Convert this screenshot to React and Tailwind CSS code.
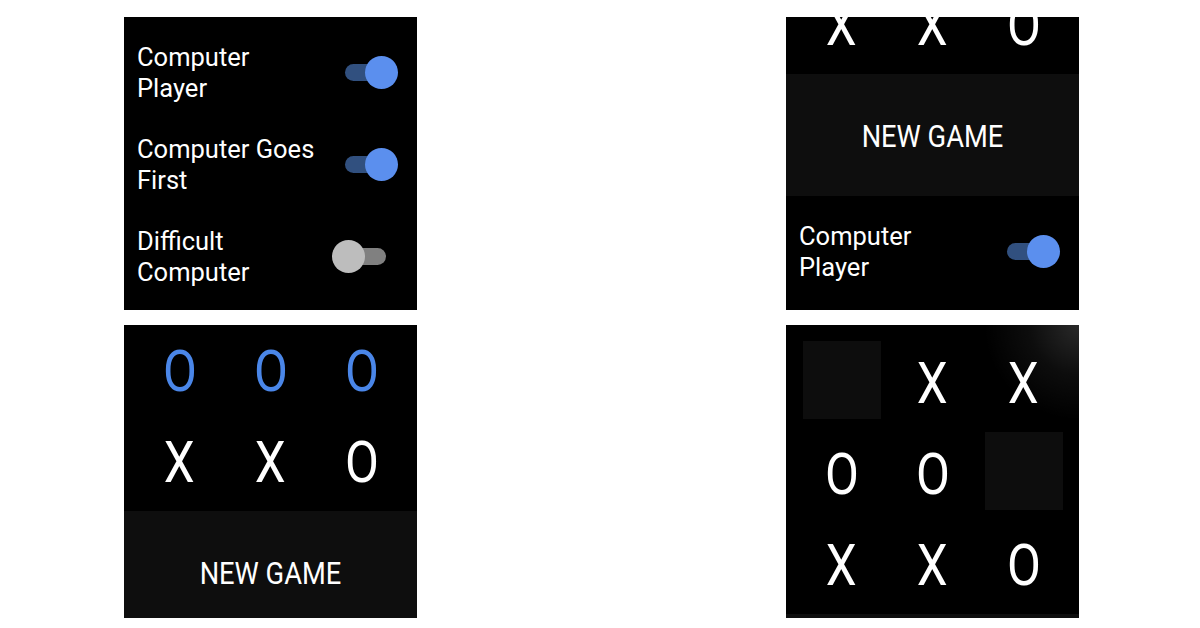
import React from "react";

function Cell({ v, blue, empty }) {
  return (
    <div
      className={
        "h-[78px] flex items-center justify-center pt-[5px] " +
        (empty ? "bg-[#0d0d0d]" : "")
      }
    >
      {v ? (
        <span
          className={
            "inline-block scale-x-85 text-[58px] leading-none " +
            (blue ? "text-[#4a86e8]" : "text-white")
          }
        >
          {v}
        </span>
      ) : null}
    </div>
  );
}

function Toggle({ on }) {
  return (
    <div className="relative w-[66px] h-[33px] shrink-0">
      <div
        className={
          "absolute left-[13px] top-[8px] w-[41px] h-[17px] rounded-full " +
          (on ? "bg-[#31507f]" : "bg-[#808080]")
        }
      />
      <div
        className={
          "absolute top-0 w-[33px] h-[33px] rounded-full " +
          (on ? "left-[33px] bg-[#5b8fee]" : "left-0 bg-[#bdbdbd]")
        }
      />
    </div>
  );
}

function SettingRow({ lines, on }) {
  return (
    <div className="h-[92px] flex items-center justify-between pl-[13px] pr-[19px]">
      <div className="text-[25.5px] leading-[31px] text-white whitespace-nowrap pt-[2px]">
        {lines[0]}
        <br />
        {lines[1]}
      </div>
      <Toggle on={on} />
    </div>
  );
}

function Content({ board }) {
  return (
    <div className="pt-4 flex flex-col">
      <div className="grid grid-cols-[repeat(3,78px)] gap-[13px] justify-center">
        {board.map((c, i) => (
          <Cell key={i} v={c.v} blue={c.blue} empty={c.empty} />
        ))}
      </div>
      <div className="mt-[13px] h-[122px] bg-[#0e0e0e] flex items-center justify-center">
        <span className="inline-block scale-x-88 text-[31px] leading-none text-white pt-[3px]">
          NEW GAME
        </span>
      </div>
      <div className="mt-[9px] flex flex-col">
        <SettingRow lines={["Computer", "Player"]} on={true} />
        <SettingRow lines={["Computer Goes", "First"]} on={true} />
        <SettingRow lines={["Difficult", "Computer"]} on={false} />
      </div>
    </div>
  );
}

const X = { v: "X" };
const O = { v: "O" };
const OB = { v: "O", blue: true };
const E = { empty: true };

const boardA = [X, O, X, OB, OB, OB, X, X, O];
const boardB = [E, X, X, O, O, E, X, X, O];

function Panel({ offset, board, glow }) {
  return (
    <div className="relative w-[293px] h-[293px] bg-black overflow-hidden">
      <div className={offset}>
        <Content board={board} />
      </div>
      {glow ? (
        <div className="pointer-events-none absolute inset-0 bg-[radial-gradient(circle_at_100%_0%,rgba(255,255,255,0.16)_0px,rgba(255,255,255,0.05)_50px,transparent_95px)]" />
      ) : null}
    </div>
  );
}

export default function App() {
  return (
    <div className="w-[1200px] h-[628px] bg-white font-[Roboto,sans-serif] pt-[17px] pl-[124px]">
      <div className="grid grid-cols-[293px_293px] gap-x-[369px] gap-y-[15px]">
        <Panel offset="mt-[-411px]" board={boardA} />
        <Panel offset="mt-[-232px]" board={boardA} />
        <Panel offset="mt-[-103px]" board={boardA} />
        <Panel offset="mt-0" board={boardB} glow />
      </div>
    </div>
  );
}
